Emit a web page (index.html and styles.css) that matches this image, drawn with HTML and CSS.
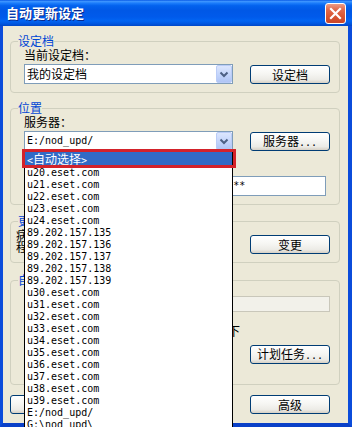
FILE: index.html
```html
<!DOCTYPE html>
<html lang="zh-CN">
<head>
<meta charset="utf-8">
<title>自动更新设定</title>
<link rel="stylesheet" href="styles.css">
</head>
<body>
<div class="window">
  <div class="titlebar">
    <span class="title">自动更新设定</span>
    <span class="close"><svg width="19" height="19" viewBox="0 0 19 19"><path d="M5 5L14 14M14 5L5 14" stroke="#fff" stroke-width="2.2" stroke-linecap="square" fill="none"/></svg></span>
  </div>
  <div class="frame">
    <fieldset class="group g1">
      <legend>设定档</legend>
      <div class="inner">
        <div class="lbl">当前设定档：</div>
        <div class="row">
          <div class="combo"><span class="val">我的设定档</span><span class="drop"><svg width="14" height="16" viewBox="0 0 14 16"><path d="M3.5 6.5L7 10L10.5 6.5" stroke="#4D6185" stroke-width="2" fill="none"/></svg></span></div>
          <button class="btn">设定档</button>
        </div>
      </div>
    </fieldset>
    <fieldset class="group g2">
      <legend>位置</legend>
      <div class="inner">
        <div class="lbl">服务器：</div>
        <div class="row">
          <div class="combo"><span class="val m">E:/nod_upd/</span><span class="drop"><svg width="14" height="16" viewBox="0 0 14 16"><path d="M3.5 6.5L7 10L10.5 6.5" stroke="#4D6185" stroke-width="2" fill="none"/></svg></span></div>
          <button class="btn">服务器<span class="m">...</span></button>
        </div>
        <div class="row2">
          <div class="pair user">
            <div class="lbl">用户名：</div>
            <div class="field m">EAV-12345678</div>
          </div>
          <div class="pair pass">
            <div class="lbl">密码：</div>
            <div class="field m">**********</div>
          </div>
        </div>
      </div>
    </fieldset>
    <fieldset class="group g3">
      <legend>更新类型</legend>
      <div class="row3">
        <div class="desc">病毒库更新<br>程序组件更新</div>
        <button class="btn">变更</button>
      </div>
    </fieldset>
    <fieldset class="group g4">
      <legend>自动更新</legend>
      <div class="inner">
        <div class="field dis"></div>
        <div class="note">程序组件更新之后可能需要重新启动一下</div>
        <div class="row4">
          <button class="btn">计划任务<span class="m">...</span></button>
        </div>
      </div>
    </fieldset>
    <div class="bottom">
      <button class="btn">确定</button>
      <button class="btn">高级</button>
    </div>
  </div>
</div>
<ul class="dropdown">
  <li class="sel"><span class="m">&lt;</span>自动选择<span class="m">&gt;</span></li>
  <li class="m">u20.eset.com</li>
  <li class="m">u21.eset.com</li>
  <li class="m">u22.eset.com</li>
  <li class="m">u23.eset.com</li>
  <li class="m">u24.eset.com</li>
  <li class="m">89.202.157.135</li>
  <li class="m">89.202.157.136</li>
  <li class="m">89.202.157.137</li>
  <li class="m">89.202.157.138</li>
  <li class="m">89.202.157.139</li>
  <li class="m">u30.eset.com</li>
  <li class="m">u31.eset.com</li>
  <li class="m">u32.eset.com</li>
  <li class="m">u33.eset.com</li>
  <li class="m">u34.eset.com</li>
  <li class="m">u35.eset.com</li>
  <li class="m">u36.eset.com</li>
  <li class="m">u37.eset.com</li>
  <li class="m">u38.eset.com</li>
  <li class="m">u39.eset.com</li>
  <li class="m">E:/nod_upd/</li>
  <li class="m">G:\nod_upd\</li>
</ul>
<div class="mark"></div>
</body>
</html>
```

FILE: styles.css
```css
* { box-sizing: border-box; }
html, body {
  margin: 0;
  padding: 0;
  width: 352px;
  height: 427px;
  overflow: hidden;
}
body {
  position: relative;
  font: 12px/14px "Noto Sans CJK SC", sans-serif;
  color: #000;
  background: #ECE9D8;
}
.m {
  font-family: "DejaVu Sans Mono", monospace;
  font-size: 10px;
}
.window {
  width: 352px;
  height: 427px;
  display: flex;
  flex-direction: column;
}
.titlebar {
  height: 26px;
  flex: none;
  display: flex;
  align-items: center;
  justify-content: space-between;
  padding: 0 6px;
  background: linear-gradient(#0A5BE6 0%, #3D95FF 6%, #1C7DFB 12%, #0362EE 22%, #0058E6 40%, #005AEB 65%, #0164F2 80%, #0058E2 90%, #0047C8 100%);
}
.title {
  color: #fff;
  font-weight: 700;
  font-size: 13px;
  line-height: 16px;
  text-shadow: 1px 1px 0 #0B2A8C;
}
.close {
  width: 21px;
  height: 21px;
  border: 1px solid #fff;
  border-radius: 3px;
  background: linear-gradient(#EC9C87 0%, #E16A4C 30%, #D6532F 70%, #C9462A 100%);
  display: flex;
  align-items: center;
  justify-content: center;
}
.close svg { display: block; }
.frame {
  flex: 1;
  display: flex;
  flex-direction: column;
  border-left: 3px solid #0B4CDB;
  border-right: 4px solid #0B4CDB;
  border-bottom: 4px solid #0A40C8;
  padding: 8px 8px 9px 7px;
  background: #ECE9D8;
}
.group {
  margin: 0;
  min-width: 0;
  flex: none;
  border: 1px solid #D0D0BF;
  border-radius: 4px;
  padding: 0 9px 8px 7px;
}
legend {
  padding: 0;
  margin: 0;
  color: #0046D5;
  line-height: 14px;
}
.group.g2 { margin-top: 8px; }
.group.g3 { margin-top: 9px; }
.group.g4 { margin-top: 10px; padding-bottom: 20px; }
.inner { margin-left: 6px; }
.lbl { line-height: 14px; white-space: nowrap; }
.row {
  margin-top: 2px;
  display: flex;
  align-items: center;
  justify-content: space-between;
}
.combo {
  width: 209px;
  height: 20px;
  border: 1px solid #7F9DB9;
  background: #fff;
  display: flex;
  align-items: center;
  justify-content: space-between;
  padding-left: 2px;
}
.val { line-height: 14px; }
.drop {
  width: 16px;
  height: 18px;
  border: 1px solid #BACCF7;
  border-radius: 2px;
  background: linear-gradient(#DCE6FD, #C1D3FB 60%, #B0C5F5);
  display: flex;
  align-items: center;
  justify-content: center;
}
.drop svg { display: block; }
.btn {
  width: 80px;
  height: 19px;
  padding: 0;
  border: 1px solid #003C74;
  border-radius: 3px;
  background: linear-gradient(#FFFFFF 0%, #F6F6F3 45%, #ECEBE6 80%, #D6D0C5 100%);
  font: 12px/15px "Noto Sans CJK SC", sans-serif;
  color: #000;
  flex: none;
}
.row2 {
  margin-top: 4px;
  display: flex;
}
.pair.user { width: 145px; }
.pair.pass { flex: 1; margin-left: 10px; margin-right: 4px; }
.field {
  margin-top: 7px;
  height: 20px;
  border: 1px solid #7F9DB9;
  background: #fff;
  padding: 0 5px;
  line-height: 18px;
  white-space: nowrap;
  overflow: hidden;
}
.row3 {
  display: flex;
  justify-content: space-between;
  align-items: flex-start;
}
.desc {
  margin-top: 1px;
  margin-left: -2px;
  line-height: 12px;
}
.row3 .btn { margin-top: 7px; }
.field.dis {
  margin-top: 9px;
  height: 16px;
  border-color: #C9C7BA;
  background: #F2F1EA;
}
.note {
  margin-top: 12px;
  line-height: 14px;
  white-space: nowrap;
}
.row4 {
  margin-top: 7px;
  display: flex;
  justify-content: flex-end;
}
.bottom {
  margin-top: 10px;
  padding-right: 10px;
  display: flex;
  justify-content: space-between;
}
.dropdown {
  position: absolute;
  left: 24px;
  top: 151px;
  width: 209px;
  margin: 0;
  padding: 0;
  list-style: none;
  background: #fff;
  border: 1px solid #000;
}
.dropdown li {
  height: 12px;
  line-height: 12px;
  padding: 2px 0 0 2px;
  white-space: nowrap;
}
.dropdown li.sel {
  height: 13px;
  line-height: 13px;
  padding-top: 0;
  background: #316AC5;
  color: #fff;
}
.mark {
  position: absolute;
  left: 22px;
  top: 149px;
  width: 214px;
  height: 19px;
  border: 3px solid #D3222A;
}
```
